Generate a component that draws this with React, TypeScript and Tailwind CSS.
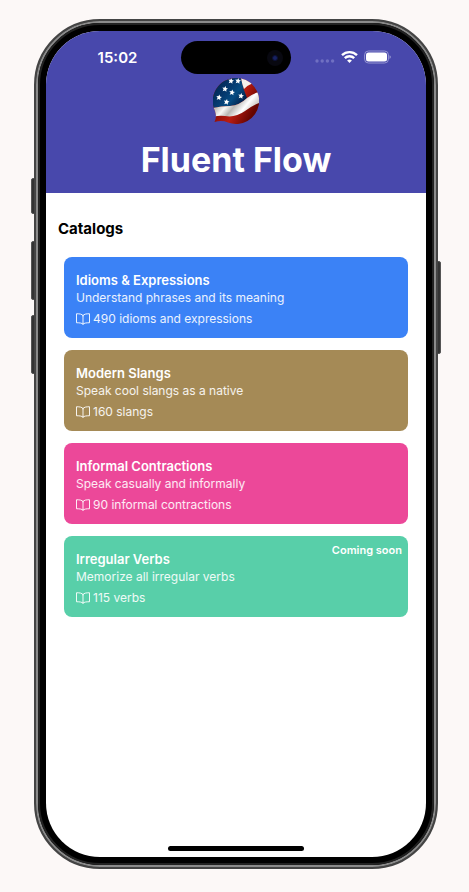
const catalogs = [
  { title: 'Idioms & Expressions', text: 'Understand phrases and its meaning', count: '490 idioms and expressions', color: 'bg-[#3b82f6]', soon: false },
  { title: 'Modern Slangs', text: 'Speak cool slangs as a native', count: '160 slangs', color: 'bg-[#a58a56]', soon: false },
  { title: 'Informal Contractions', text: 'Speak casually and informally', count: '90 informal contractions', color: 'bg-[#ec4899]', soon: false },
  { title: 'Irregular Verbs', text: 'Memorize all irregular verbs', count: '115 verbs', color: 'bg-[#58cfa9]', soon: true },
];

function BookIcon() {
  return (
    <svg className="h-3 w-[14px]" viewBox="0 0 28 24" fill="none" stroke="currentColor" strokeWidth="2" strokeLinejoin="round" strokeLinecap="round" aria-hidden="true">
      <path d="M14 5C12 2 7 1.500 1 1.500V19.500C7 19.500 12 20 14 22.500C16 20 21 19.500 27 19.500V1.500C21 1.500 16 2 14 5ZM14 5V22.500" />
    </svg>
  );
}

const STAR = 'M0-3.200L.9-1.100 3-1 1.400.5 2 2.700 0 1.500-2 2.700-1.400.5-3-1-.9-1.100Z';
const stars = [[18, 3], [25, 3], [12, 11], [19, 14.5], [6, 19.5], [28, 18], [13.5, 24]];

function FlagLogo() {
  return (
    <svg className="size-[46px]" viewBox="0 0 46 46" role="img" aria-label="Fluent Flow logo">
      <defs>
        <clipPath id="bubble">
          <path d="M23 0A23 23 0 1 1 15 44.500Q9 42 1.500 44Q4 39 2 33A23 23 0 0 1 23 0Z" />
        </clipPath>
        <linearGradient id="navy" x1="0" y1="0" x2="1" y2=".7">
          <stop offset="0" stopColor="#021c46" /><stop offset=".45" stopColor="#05376c" /><stop offset=".7" stopColor="#064b82" /><stop offset="1" stopColor="#021b43" />
        </linearGradient>
        <linearGradient id="red" x1="0" y1="0" x2="1" y2=".5">
          <stop offset="0" stopColor="#d6301e" /><stop offset=".35" stopColor="#8c0f08" /><stop offset=".65" stopColor="#b91c12" /><stop offset="1" stopColor="#650500" />
        </linearGradient>
        <linearGradient id="silk" x1="0" y1="0" x2="1" y2=".45">
          <stop offset="0" stopColor="#fff" /><stop offset=".3" stopColor="#c4c1bd" /><stop offset=".45" stopColor="#f8f8f6" /><stop offset=".6" stopColor="#b9b7b4" /><stop offset=".8" stopColor="#fff" /><stop offset="1" stopColor="#c8c4be" />
        </linearGradient>
      </defs>
      <g clipPath="url(#bubble)">
        <path fill="url(#red)" d="M0 0H46V46H0Z" />
        <path fill="url(#navy)" d="M0 0H28Q30 11 34 20Q27 27 17 28Q8 28 0 30Z" />
        <path fill="#f4f1ee" d="M28 0H34L40 5Q35 7 31 11Q29 6 28 0Z" />
        <path fill="url(#silk)" d="M0 30Q8 28 17 28Q27 27 34 20Q39 16 46 14V25Q40 27 32 33Q22 40 12 38Q6 37 0 39Z" />
        {stars.map(([x, y]) => (
          <path key={`${x}-${y}`} d={STAR} fill="#fff" transform={`translate(${x} ${y}) rotate(10) scale(.95)`} />
        ))}
      </g>
    </svg>
  );
}

function StatusIcons() {
  return (
    <div className="flex items-center justify-center gap-[6px] pr-3 pb-[1px]">
      <svg className="h-[14px] w-5" viewBox="0 0 20 14" fill="#7070c2" aria-hidden="true">
        <circle cx="2" cy="11" r="1.700" /><circle cx="7.200" cy="11" r="1.700" /><circle cx="12.400" cy="11" r="1.700" /><circle cx="17.600" cy="11" r="1.700" />
      </svg>
      <svg className="h-[14px] w-[17px]" viewBox="0 0 17 14" fill="none" stroke="#fff" strokeWidth="2.400" aria-hidden="true">
        <path d="M1 5.200A10.800 10.800 0 0 1 16 5.200M3.800 8.200A6.800 6.800 0 0 1 13.200 8.200" />
        <path d="M8.500 13L6.100 10.600A3.400 3.400 0 0 1 10.900 10.600Z" fill="#fff" stroke="none" />
      </svg>
      <svg className="h-[14px] w-[27px]" viewBox="0 0 27 14" aria-hidden="true">
        <rect x=".6" y="1" width="23.800" height="12" rx="3.800" fill="none" stroke="#9595d2" />
        <rect x="2" y="2.500" width="21" height="9" rx="2.500" fill="#fff" />
        <path d="M25.500 5.300Q26.900 5.800 26.900 7T25.500 8.900Z" fill="#9595d2" />
      </svg>
    </div>
  );
}

export default function App() {
  return (
    <main className="min-h-screen bg-[#fcf8f7] pt-[19px] pr-[31px] pb-[23px] pl-[34px] font-['Inter',sans-serif]">
      <div className="relative mx-auto aspect-[404/850] max-w-[404px]">
        <span className="absolute top-[159px] -left-[3px] h-9 w-2 rounded-xs border border-[#555] bg-[#333]" />
        <span className="absolute top-[222px] -left-[3px] h-[59px] w-2 rounded-xs border border-[#555] bg-[#333]" />
        <span className="absolute top-[296px] -left-[3px] h-[59px] w-2 rounded-xs border border-[#555] bg-[#333]" />
        <span className="absolute top-[242px] -right-[3px] h-[93px] w-2 rounded-xs border border-[#555] bg-[#333]" />
        <div className="relative h-full rounded-[66px] border-2 border-[#444] bg-black">
          <div className="h-full rounded-[64px] border-2 border-[#8b8b8b]">
            <div className="h-full rounded-[62px] border-2 border-[#222] p-[6px]">
              <div className="flex h-full flex-col overflow-hidden rounded-[54px] bg-white">
                <header className="flex h-[162px] shrink-0 flex-col items-center bg-[#4848ac] pt-[10px] text-white">
                  <div className="grid w-full grid-cols-[1fr_110px_1fr] items-center">
                    <time className="pl-2 text-center text-[15px] leading-6 font-semibold">15:02</time>
                    <div className="flex h-[33px] items-center justify-end rounded-full bg-black pr-2">
                      <span className="flex size-4 items-center justify-center rounded-full bg-[#080810]">
                        <span className="size-[6px] rounded-full border border-[#0c1135] bg-[#172263]" />
                      </span>
                    </div>
                    <StatusIcons />
                  </div>
                  <div className="mt-1"><FlagLogo /></div>
                  <h1 className="mt-3 text-[34px] leading-12 font-bold">Fluent Flow</h1>
                </header>
                <section className="px-3 pt-6">
                  <h2 className="text-[15px] leading-6 font-bold text-black">Catalogs</h2>
                  <div className="mt-4 flex flex-col gap-3 px-[6px]">
                    {catalogs.map((c) => (
                      <button key={c.title} type="button" className={`relative rounded-lg px-3 pt-[13px] pb-[11px] text-left text-white ${c.color}`}>
                        <span className="block text-[13px] leading-5 font-semibold">{c.title}</span>
                        <span className="block text-xs leading-4 text-white/90">{c.text}</span>
                        <span className="mt-[5px] flex items-center gap-[3px] text-xs leading-4 text-white/90"><BookIcon />{c.count}</span>
                        {c.soon && <span className="absolute top-[6px] right-[6px] text-[11px] leading-4 font-semibold">Coming soon</span>}
                      </button>
                    ))}
                  </div>
                </section>
                <div className="mx-auto mt-auto mb-[6px] h-[5px] w-[136px] rounded-full bg-black" />
              </div>
            </div>
          </div>
        </div>
      </div>
    </main>
  );
}
